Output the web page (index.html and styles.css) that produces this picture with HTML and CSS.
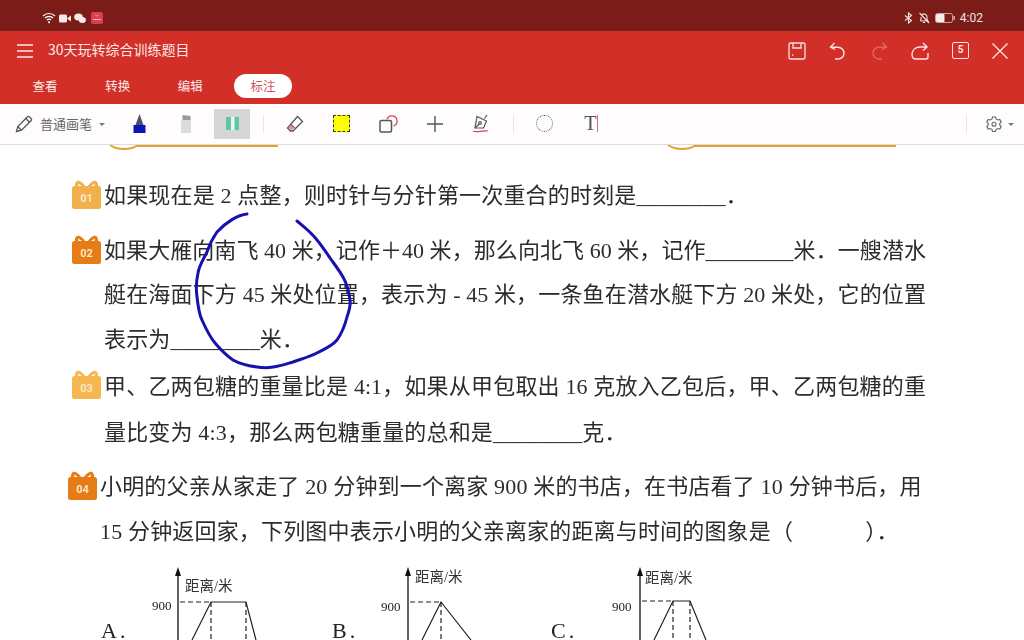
FILE: index.html
```html
<!DOCTYPE html>
<html lang="zh">
<head>
<meta charset="utf-8">
<title>30天玩转综合训练题目</title>
<link rel="stylesheet" href="styles.css">
</head>
<body>
<div class="screen">
  <div class="status">
    <div class="status-left">
      <svg width="14" height="12" viewBox="0 0 14 12" fill="none" stroke="#fff" stroke-width="1.2"><path d="M1 4a8.500 8.500 0 0 1 12 0M3 6a5.600 5.600 0 0 1 8 0M5 8a2.800 2.800 0 0 1 4 0"/><circle cx="7" cy="10.300" r="1" fill="#fff" stroke="none"/></svg>
      <svg width="12" height="9" viewBox="0 0 12 9" fill="#f4e9e8"><rect x="0" y="0.500" width="8" height="8" rx="1.500"/><path d="M8.500 4 12 1.500v6L8.500 5z"/></svg>
      <svg width="12" height="11" viewBox="0 0 12 11" fill="#f4e9e8"><ellipse cx="4.500" cy="4" rx="4.300" ry="3.600"/><ellipse cx="8.300" cy="7" rx="3.600" ry="3"/></svg>
      <svg class="app" width="12" height="12" viewBox="0 0 12 12"><rect width="12" height="12" rx="2" fill="#d9404e"/><path d="M2 7.500h8" stroke="#f5b5b8"/><path d="M4.500 2.500a1.500 1.500 0 0 0 3 0" fill="none" stroke="#f5b5b8" stroke-width=".7"/></svg>
    </div>
    <div class="status-right">
      <svg width="9" height="12" viewBox="0 0 9 12" fill="none" stroke="#f0e4e3" stroke-width="1.100"><path d="M1 3.500 7.500 8.500 4.500 11V1L7.500 3.500 1 8.500"/></svg>
      <svg width="12" height="12" viewBox="0 0 12 12" fill="none" stroke="#f0e4e3" stroke-width="1.100"><path d="M2.500 9h7.500L9 7.500V5a3 3 0 0 0-5-2.300M3 5v2.500L2.500 9M5 10.500h2M1.500 1 11 11"/></svg>
      <svg width="20" height="10" viewBox="0 0 20 10"><rect x=".5" y=".5" width="17" height="9" rx="2" fill="none" stroke="#c9a8a6"/><rect x="1" y="1" width="8.500" height="8" rx="1" fill="#f3eceb"/><rect x="18.500" y="3" width="1.200" height="4" fill="#e6d8d7"/></svg>
      <span class="clock">4:02</span>
    </div>
  </div>

  <header class="appbar">
    <div class="title-row">
      <svg class="menu" width="16" height="14" viewBox="0 0 16 14" stroke="#fbe9e7" stroke-width="1.400"><path d="M0 1h16M0 7h16M0 13h16"/></svg>
      <span class="title">30天玩转综合训练题目</span>
      <div class="actions">
        <svg width="18" height="18" viewBox="0 0 18 18" fill="none" stroke="#fbe4e2" stroke-width="1.300"><rect x="1" y="1" width="16" height="16" rx="1.500"/><path d="M5 1v5h8V1"/><path d="M4 13h1.300"/></svg>
        <svg width="18" height="18" viewBox="0 0 18 18" fill="none" stroke="#fbe4e2" stroke-width="1.400"><path d="M5.500 1 1.500 5l4.500 2.500M1.800 5.200H9a6 6 0 0 1 6 6 5.800 5.800 0 0 1-6 5.800H6"/></svg>
        <svg width="18" height="18" viewBox="0 0 18 18" fill="none" stroke="#e56a60" stroke-width="1.300"><path d="M12.500 1 16.500 5 12 7.500M16.200 5.200H9a6 6 0 0 0-6 6 5.800 5.800 0 0 0 6 5.800h3"/></svg>
        <svg width="18" height="18" viewBox="0 0 18 18" fill="none" stroke="#fbe4e2" stroke-width="1.400"><path d="M12 1l4 4-4 3.500M15.500 5H9C4.500 5 1.500 8 1 12"/><path d="M1 12c0 3 1 5 3.500 5H15a2 2 0 0 0 2-2v-4"/></svg>
        <span class="pages">5</span>
        <svg width="16" height="16" viewBox="0 0 16 16" stroke="#fbe4e2" stroke-width="1.400"><path d="M.5.500l15 15M15.500.500l-15 15"/></svg>
      </div>
    </div>
    <nav class="tabs">
      <span class="tab">查看</span>
      <span class="tab">转换</span>
      <span class="tab">编辑</span>
      <span class="tab active">标注</span>
    </nav>
  </header>

  <div class="toolbar">
    <svg class="pencil" width="18" height="18" viewBox="0 0 18 18" fill="none" stroke="#555" stroke-width="1.300"><path d="M1.500 16.500 2.800 11.500 12.500 1.800a1.300 1.300 0 0 1 1.800 0l1.900 1.900a1.300 1.300 0 0 1 0 1.800L6.500 15.200zM2.800 11.500 6.500 15.200M10.800 3.500l3.700 3.700"/></svg>
    <span class="pen-name">普通画笔</span>
    <span class="caret"></span>
    <div class="tool first"><svg width="13" height="19" viewBox="0 0 13 19"><path d="M6.500 0 10.500 11h-8z" fill="#4a5266"/><rect x=".5" y="11" width="12" height="8" fill="#0a16b8"/></svg></div>
    <div class="tool"><svg width="12" height="18" viewBox="0 0 12 18"><path d="M2.500 0 10.500 1V5h-8z" fill="#9a9a9a"/><rect x="1" y="5" width="10" height="13" fill="#dcdcdc"/></svg></div>
    <div class="tool selected"><svg width="13" height="13" viewBox="0 0 13 13"><rect width="13" height="13" fill="#62c6a6"/><rect x="5" width="3.500" height="13" fill="#eef5f2"/></svg></div>
    <span class="sep"></span>
    <div class="tool"><svg width="18" height="18" viewBox="0 0 18 18" fill="none" stroke="#555" stroke-width="1.300"><path d="M11.500 1.500 16.500 6.500 7 16H4.500L1.500 13zM5 9.500l3.500 3.500"/><path d="M2.500 12.500 5 10 8 13 5.500 15.500z" fill="#e98d88" stroke="none"/></svg></div>
    <div class="tool"><span class="marquee"></span></div>
    <div class="tool"><svg width="19" height="18" viewBox="0 0 19 18" fill="none"><rect x="1" y="5.500" width="11.500" height="11.500" rx="1.500" stroke="#555" stroke-width="1.500"/><path d="M8 4.200A5.200 5.200 0 0 1 18 5.500 5.200 5.200 0 0 1 14.500 11" stroke="#d9464a" stroke-width="1.300"/></svg></div>
    <div class="tool"><svg width="16" height="16" viewBox="0 0 16 16" stroke="#555" stroke-width="1.400"><path d="M8 0v16M0 8h16"/></svg></div>
    <div class="tool"><svg width="18" height="19" viewBox="0 0 18 19" fill="none" stroke="#555" stroke-width="1.200"><path d="M15 1 12.500 4.500M5 2.500 14.500 7 11.500 14H3z"/><circle cx="8" cy="9" r="1.300"/><path d="M3 14 7.200 10"/><path d="M1 17c4 2 9-1 15 0" stroke="#d9464a"/></svg></div>
    <span class="sep"></span>
    <div class="tool"><span class="lasso"></span></div>
    <div class="tool text-tool"><span class="tee">T</span><span class="cursor"></span></div>
    <span class="sep right"></span>
    <svg class="gear" width="16" height="16" viewBox="0 0 16 16" fill="none" stroke="#666" stroke-width="1.100"><path d="M6.500 1h3l.5 2 1.800 1 2-.6 1.400 2.600-1.500 1.500v1.500l1.500 1.500-1.400 2.600-2-.6-1.800 1-.5 2h-3l-.5-2-1.800-1-2 .6L.8 10.500 2.300 9V7.500L.8 6l1.400-2.600 2 .6L6 3z"/><circle cx="8" cy="8.200" r="2"/></svg>
    <span class="caret small"></span>
  </div>

  <main class="doc">
    <svg class="banner" width="1024" height="6" viewBox="0 0 1024 6" fill="none" stroke="#e2a232" stroke-width="2"><path d="M110 0c4 3 8 4 14 4s10-1 14-4M136 1H278"/><path d="M668 0c4 3 8 4 14 4s10-1 14-4M694 1H896"/></svg>

    <section class="q q1">
      <svg class="gift" width="29" height="30" viewBox="0 0 29 30"><use href="#giftshape" fill="#f2b04d"/><text x="14.500" y="22" class="gift-no">01</text></svg>
      <div class="body"><p class="line">如果现在是 2 点整，则时针与分针第一次重合的时刻是________．</p></div>
    </section>

    <section class="q q2">
      <svg class="gift" width="29" height="30" viewBox="0 0 29 30"><use href="#giftshape" fill="#e67c16"/><text x="14.500" y="22" class="gift-no">02</text></svg>
      <div class="body">
        <p class="line full">如果大雁向南飞 40 米，记作＋40 米，那么向北飞 60 米，记作________米．一艘潜水</p>
        <p class="line full">艇在海面下方 45 米处位置，表示为 - 45 米，一条鱼在潜水艇下方 20 米处，它的位置</p>
        <p class="line">表示为________米．</p>
      </div>
    </section>

    <section class="q q3">
      <svg class="gift" width="29" height="30" viewBox="0 0 29 30"><use href="#giftshape" fill="#f7b750"/><text x="14.500" y="22" class="gift-no">03</text></svg>
      <div class="body">
        <p class="line full">甲、乙两包糖的重量比是 4:1，如果从甲包取出 16 克放入乙包后，甲、乙两包糖的重</p>
        <p class="line">量比变为 4:3，那么两包糖重量的总和是________克．</p>
      </div>
    </section>

    <section class="q q4">
      <svg class="gift" width="29" height="30" viewBox="0 0 29 30"><use href="#giftshape" fill="#e67c16"/><text x="14.500" y="22" class="gift-no">04</text></svg>
      <div class="body">
        <p class="line">小明的父亲从家走了 20 分钟到一个离家 900 米的书店，在书店看了 10 分钟书后，用</p>
        <p class="line">15 分钟返回家，下列图中表示小明的父亲离家的距离与时间的图象是（　　　 ）．</p>
      </div>
    </section>

    <svg class="figures" width="1024" height="76" viewBox="0 564 1024 76" fill="none" stroke="#222" stroke-width="1.200">
      <text class="letter" x="101" y="638">A.</text><text class="letter" x="332" y="638">B.</text><text class="letter" x="551" y="638">C.</text>
      <path d="M178 640V572M408 640V572M640 640V572" stroke-width="1.400"/>
      <path d="M178 567l-3 9h6zM408 567l-3 9h6zM640 567l-3 9h6z" fill="#111" stroke="none"/>
      <path d="M180 602H211M211 602V640M246 602V640M410 602H441M441 602V640M642 601H673M673 601V640M690 601V640" stroke-dasharray="5 3"/>
      <path d="M192 640 211 602H246L256 640M422 640 441 602 471 640M654 640 673 601H690L706 640"/>
      <text class="axis" x="185" y="591">距离/米</text><text class="axis" x="415" y="582">距离/米</text><text class="axis" x="645" y="583">距离/米</text>
      <text class="num" x="152" y="610">900</text><text class="num" x="381" y="611">900</text><text class="num" x="612" y="611">900</text>
    </svg>
  </main>

  <svg class="ink" width="1024" height="640" viewBox="0 0 1024 640" fill="none"><path d="M247 214C238 215 226 222 217 232 212 239 209 246 207 252 203 260 199 266 198 273 196 282 196 290 197 297 198 306 199 314 202 320 206 329 210 337 215 343 221 350 227 356 233 360 240 364 249 366 257 367 263 368 268 368 273 367 280 366 286 364 293 362 301 359 309 357 317 353 325 349 332 346 337 340 342 333 345 325 347 317 349 311 351 306 350 300 349 292 347 284 343 277 339 270 335 265 330 258 326 252 322 246 317 240 311 232 304 227 297 221" stroke="#1712ad" stroke-width="3" stroke-linecap="round"/></svg>
  <svg class="defs" width="0" height="0"><defs><g id="giftshape"><rect x="0" y="6" width="29" height="23" rx="2.500"/><path d="M14.500 8C11 2 7 0 5 1S2 6 4 8zM14.500 8C18 2 22 0 24 1S27 6 25 8z"/><path d="M6 3.500 10 6 6.500 6zM23 3.500 19 6 22.500 6z" fill="#fff"/></g></defs></svg>
</div>
</body>
</html>
```

FILE: styles.css
```css
* { box-sizing: border-box; }
html, body { margin: 0; padding: 0; }
body { width: 1024px; height: 640px; overflow: hidden; background: #fff; }
.screen { position: relative; width: 1024px; height: 640px; overflow: hidden; font-family: "Noto Sans CJK SC", "Noto Sans", sans-serif; }

.status { height: 31px; background: #7b1c18; display: flex; justify-content: space-between; align-items: center; padding: 5px 41px 0 42px; }
.status-left { display: flex; align-items: center; gap: 3px; }
.status-left .app { margin-left: 2px; }
.status-right { display: flex; align-items: center; gap: 5px; }
.clock { font: 12px Roboto, sans-serif; color: #f0e4e3; }

.appbar { height: 73px; background: #d22f29; color: #fbe9e7; }
.title-row { height: 39px; display: flex; align-items: center; padding: 0 16px 0 17px; }
.menu { margin-right: 15px; }
.title { font-size: 14px; flex: 1; margin-top: -3px; }
.actions { display: flex; align-items: center; gap: 23px; }
.pages { width: 17px; height: 17px; border: 1.400px solid #fbe4e2; border-radius: 2px; font: bold 10px/14px Roboto, sans-serif; text-align: center; color: #fbe4e2; }

.tabs { display: flex; padding-left: 16px; gap: 14.700px; height: 34px; padding-top: 4px; }
.tab { width: 58px; height: 24px; font-size: 12.500px; line-height: 24px; text-align: center; border-radius: 12px; }
.tab.active { background: #fff; color: #d2535a; }

.toolbar { height: 41px; background: #fefcfd; border-bottom: 1px solid #dedcdc; display: flex; align-items: center; padding: 0 0 1px 15px; color: #666; }
.pencil { margin-right: 7px; }
.pen-name { font-size: 13px; width: 52px; white-space: nowrap; }
.caret { width: 0; height: 0; border: 3px solid transparent; border-top: 3px solid #777; border-bottom: 0; margin-left: 7px; margin-top: 1px; }
.tool { width: 46.500px; height: 30px; display: flex; align-items: center; justify-content: center; }
.tool.first { margin-left: 11px; }
.tool.selected { width: 36px; background: #d6d6d6; margin: 0 5px; }
.sep { width: 1px; height: 18px; background: #e6e4e4; margin: 0 8px; }
.marquee { width: 17px; height: 17px; background: #ffff00; border: 1.500px dashed #3b3b10; }
.lasso { width: 17px; height: 17px; border: 1.500px dotted #555; border-radius: 50%; }
.tee { font: 20px "Liberation Serif", serif; color: #555; }
.cursor { width: 1px; height: 17px; background: #cf6d78; margin-left: 1px; }
.sep.right { margin-left: 351px; margin-right: 19px; }
.gear { margin-right: 6px; }
.caret.small { margin-left: 0; }

.doc { position: relative; height: 495px; padding-top: 29px; font-family: "Liberation Serif", "Noto Sans CJK SC", serif; font-size: 22px; color: #2c2c2c; filter: blur(.35px); }
.banner { position: absolute; left: 0; top: 0; }
.q { display: flex; padding-left: 72px; }
.gift { flex: none; margin-top: 6px; margin-right: 3px; overflow: visible; }
.q4 { padding-left: 68px; }
.q2 { margin-top: 10px; }
.q3 { margin-top: 2px; }
.q4 { margin-top: 10px; }
.line { margin: 0; height: 44.500px; line-height: 44.500px; white-space: nowrap; letter-spacing: .17px; }
.q3 .line { height: 45.500px; line-height: 45.500px; }
.line.full { width: 822px; text-align-last: justify; white-space: normal; letter-spacing: 0; }
.figures { display: block; margin-top: 10px; }
.letter { font: 22px "Liberation Serif", serif; letter-spacing: 3px; fill: #222; stroke: none; }
.axis { font: 14.500px "Liberation Serif", "Noto Sans CJK SC", serif; fill: #333; stroke: none; }
.num { font: 13px "Liberation Serif", serif; fill: #222; stroke: none; }
.gift-no { font: bold 11px Roboto, sans-serif; fill: #fde9c8; stroke: none; text-anchor: middle; }
.ink { position: absolute; left: 0; top: 0; pointer-events: none; }
.defs { position: absolute; }
```
